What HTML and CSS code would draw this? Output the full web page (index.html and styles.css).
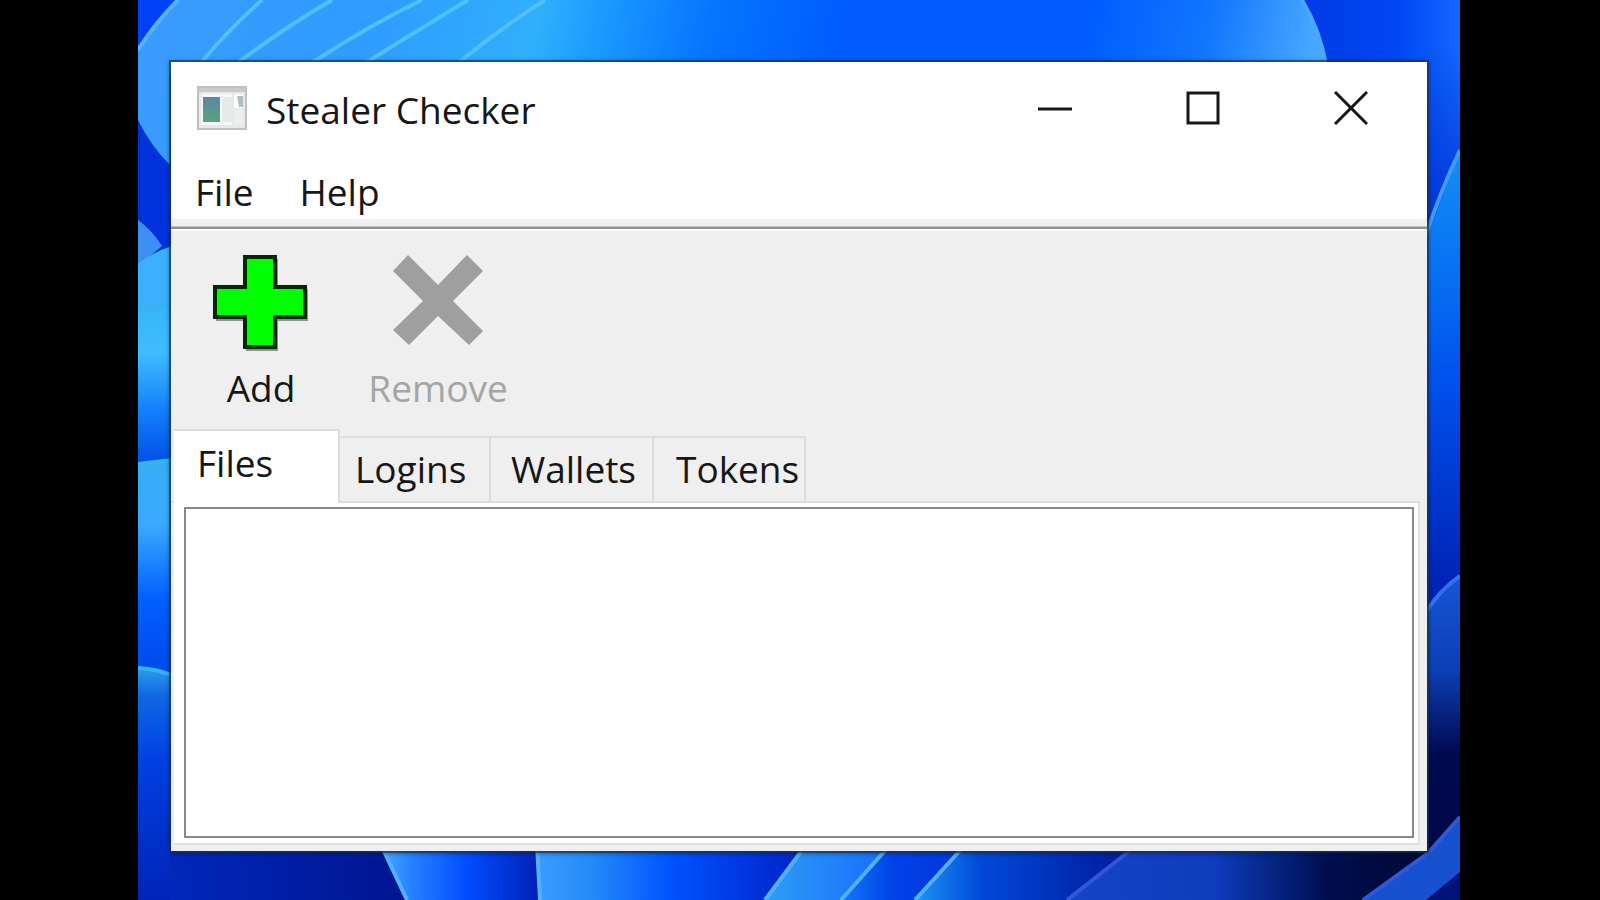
FILE: index.html
```html
<!DOCTYPE html>
<html lang="en">
<head>
<meta charset="utf-8">
<title>Stealer Checker</title>
<link rel="stylesheet" href="styles.css">
</head>
<body>
<main class="desktop">
  <svg class="wallpaper" viewBox="0 0 1322 900" preserveAspectRatio="none" aria-hidden="true">
    <defs>
      <linearGradient id="dome" gradientUnits="userSpaceOnUse" x1="0" y1="0" x2="1170" y2="250">
        <stop offset="0" stop-color="#3a9bfd"/><stop offset=".2" stop-color="#2f9cff"/><stop offset=".33" stop-color="#2fb0fc"/><stop offset=".38" stop-color="#1c9bff"/><stop offset=".47" stop-color="#0676ff"/><stop offset=".58" stop-color="#005cff"/><stop offset=".78" stop-color="#005cff"/><stop offset=".88" stop-color="#1276ff"/><stop offset=".97" stop-color="#48a8ff"/>
      </linearGradient>
      <linearGradient id="corner" gradientUnits="userSpaceOnUse" x1="1165" y1="0" x2="1322" y2="0">
        <stop offset="0" stop-color="#003be6"/><stop offset=".6" stop-color="#0046f2"/><stop offset="1" stop-color="#1468ff"/>
      </linearGradient>
      <linearGradient id="shade" x1="0" y1="0" x2="0" y2="1">
        <stop offset=".2" stop-color="#0030d0" stop-opacity="0"/><stop offset="1" stop-color="#0030d0"/>
      </linearGradient>
      <linearGradient id="left1" x1="0" y1="0" x2="0" y2="1">
        <stop offset="0" stop-color="#34b4fa"/><stop offset=".3" stop-color="#40bdff"/><stop offset=".65" stop-color="#1583fb"/><stop offset="1" stop-color="#0050e8"/>
      </linearGradient>
      <linearGradient id="left2" x1="0" y1="0" x2="0" y2="1">
        <stop offset="0" stop-color="#35aef4"/><stop offset=".3" stop-color="#3ba9ff"/><stop offset=".65" stop-color="#005eff"/><stop offset="1" stop-color="#0048ea"/>
      </linearGradient>
      <linearGradient id="left3" x1="0" y1="0" x2="0" y2="1">
        <stop offset="0" stop-color="#2c9de8"/><stop offset=".12" stop-color="#0f68e6"/><stop offset=".4" stop-color="#0040e2"/><stop offset="1" stop-color="#0024b8"/>
      </linearGradient>
      <linearGradient id="right1" gradientUnits="userSpaceOnUse" x1="0" y1="170" x2="0" y2="600">
        <stop offset="0" stop-color="#128af2"/><stop offset=".25" stop-color="#086ff2"/><stop offset=".5" stop-color="#0050ee"/><stop offset="1" stop-color="#0020b0"/>
      </linearGradient>
      <linearGradient id="right2" gradientUnits="userSpaceOnUse" x1="0" y1="575" x2="0" y2="850">
        <stop offset="0" stop-color="#1557d6"/><stop offset=".35" stop-color="#0c3eb4"/><stop offset=".65" stop-color="#000a50"/><stop offset="1" stop-color="#000a48"/>
      </linearGradient>
      <linearGradient id="bottom0"><stop offset="0" stop-color="#0028bb"/><stop offset="1" stop-color="#001590"/></linearGradient>
      <linearGradient id="bottom1"><stop offset="0" stop-color="#48aaff"/><stop offset=".2" stop-color="#2580ff"/><stop offset=".55" stop-color="#004cff"/><stop offset="1" stop-color="#0020b4"/></linearGradient>
      <linearGradient id="bottom2"><stop offset="0" stop-color="#3b9cff"/><stop offset=".2" stop-color="#248cf8"/><stop offset=".5" stop-color="#0052ff"/><stop offset="1" stop-color="#0020c4"/></linearGradient>
      <linearGradient id="bottom3"><stop offset="0" stop-color="#2d9df4"/><stop offset="1" stop-color="#186cff"/></linearGradient>
      <linearGradient id="bottom4"><stop offset="0" stop-color="#1678fa"/><stop offset=".4" stop-color="#0044e8"/><stop offset="1" stop-color="#0034d8"/></linearGradient>
      <linearGradient id="bottom5"><stop offset="0" stop-color="#1d94f4"/><stop offset=".3" stop-color="#0048d8"/><stop offset="1" stop-color="#001898"/></linearGradient>
      <linearGradient id="bottom6"><stop offset="0" stop-color="#1644c8"/><stop offset=".4" stop-color="#0d3cbc"/><stop offset=".7" stop-color="#000e50"/><stop offset="1" stop-color="#000730"/></linearGradient>
    </defs>
    <rect width="1322" height="900" fill="#0032dc"/>
    <path d="M0 0H37L0 46Z" fill="#0040f8"/>
    <path d="M37 0H1164Q1182 30 1188 75H32V165Q12 145 0 120V46Z" fill="url(#dome)"/>
    <path d="M1164 0H1322V260H1188V75Q1182 30 1164 0Z" fill="url(#corner)"/>
    <rect x="1285" width="37" height="240" fill="url(#shade)"/>
    <g fill="none" stroke="#50c0ff" stroke-width="4">
      <path d="M40 0Q16 24 0 50" stroke="#55b4ff"/>
      <path d="M124 0Q90 30 62 64M194 0Q146 28 98 64M284 0Q230 26 172 64M330 0Q280 30 226 64M407 0Q360 30 319 64"/>
      <path d="M1164 0Q1182 30 1188 65" stroke="#48a8ff"/>
    </g>
    <path d="M0 220Q14 230 24 246L0 266Z" fill="#3c90f4"/>
    <path d="M0 264Q14 252 34 246V310H0Z" fill="#3cb0ff"/>
    <path d="M0 310L34 305V462H0Z" fill="url(#left1)"/>
    <path d="M0 464L34 460V676H0Z" fill="url(#left2)"/>
    <path d="M0 668Q18 669 34 675V900H0Z" fill="url(#left3)"/>
    <path d="M0 310L34 305M0 464L34 460M0 668Q18 669 34 675" stroke="#35b5ee" stroke-width="4" fill="none"/>
    <path d="M1322 150L1288 240V620L1322 575Z" fill="url(#right1)"/>
    <path d="M1322 150Q1303 190 1288 235" stroke="#429cff" stroke-width="4" fill="none"/>
    <path d="M1322 575L1288 612V860H1322Z" fill="url(#right2)"/>
    <path d="M1322 576Q1302 590 1288 612" stroke="#3270f0" stroke-width="4" fill="none"/>
    <path d="M32 845H246L269 900H32Z" fill="url(#bottom0)"/>
    <path d="M243 845H399L402 900H269Z" fill="url(#bottom1)"/>
    <path d="M399 845H668L627 900H402Z" fill="url(#bottom2)"/>
    <path d="M668 845H752L703 900H627Z" fill="url(#bottom3)"/>
    <path d="M752 845H827L777 900H703Z" fill="url(#bottom4)"/>
    <path d="M827 845H999L929 900H777Z" fill="url(#bottom5)"/>
    <path d="M999 845H1300L1225 900H929Z" fill="url(#bottom6)"/>
    <path d="M1225 900L1290 853L1322 817V872L1288 900Z" fill="#1651d0"/>
    <path d="M1322 872L1288 900H1322Z" fill="#001478"/>
    <g fill="none" stroke-width="4">
      <path d="M243 845L269 900M399 845L402 900M668 845L627 900M752 845L703 900M827 845L777 900" stroke="#52b2ff"/>
      <path d="M999 845L929 900M1225 900L1290 853L1322 817" stroke="#3058d8"/>
    </g>
  </svg>

  <section class="window" aria-label="Stealer Checker">
    <header class="titlebar">
      <svg class="app-icon" viewBox="0 0 50 44" aria-hidden="true">
        <defs><linearGradient id="pane" x1="0" y1="0" x2="0" y2="1"><stop offset="0" stop-color="#5b86a4"/><stop offset="1" stop-color="#58a47c"/></linearGradient></defs>
        <rect x="1" y="1" width="48" height="42" fill="#e8e8ea" stroke="#c0c0c2" stroke-width="2"/>
        <rect x="2" y="2" width="46" height="4" fill="#cbc9ce"/>
        <rect x="4" y="8" width="31" height="31" fill="#f7f7f8"/>
        <rect x="6" y="11" width="17" height="25" fill="url(#pane)"/>
        <rect x="25" y="11" width="10" height="25" fill="#e4ebea"/>
        <rect x="37" y="8" width="9" height="14" fill="#fff"/>
        <path d="M40 10H46V21H42Z" fill="#b0bfc4"/>
        <rect x="37" y="24" width="9" height="15" fill="#eeeeec"/>
      </svg>
      <h1 class="title">Stealer Checker</h1>
      <div class="controls">
        <button class="control" aria-label="Minimize"><svg viewBox="0 0 34 34"><path d="M0 18H34"/></svg></button>
        <button class="control" aria-label="Maximize"><svg viewBox="0 0 34 34"><path d="M2 2H32V32H2Z"/></svg></button>
        <button class="control" aria-label="Close"><svg viewBox="0 0 34 34"><path d="M1 1L33 33M33 1L1 33"/></svg></button>
      </div>
    </header>
    <nav class="menubar">
      <button class="menu">File</button>
      <button class="menu">Help</button>
    </nav>
    <div class="toolbar">
      <button class="tool">
        <svg viewBox="0 0 96 96" aria-hidden="true"><path d="M33 4H65V34H95V66H65V96H33V66H3V34H33Z" fill="#8f8f8f"/><path d="M32 2H62V32H92V62H62V92H32V62H2V32H32Z" fill="#0f0" stroke="#002b00" stroke-width="4"/></svg>
        <span>Add</span>
      </button>
      <button class="tool" disabled>
        <svg viewBox="0 0 96 96" aria-hidden="true"><path d="M18 0L48 30L77 0L93 16L63 46L93 76L79 90L48 61L19 90L3 75L33 46L3 16Z" fill="#9f9f9f"/></svg>
        <span>Remove</span>
      </button>
    </div>
    <div class="tabs" role="tablist">
      <button class="tab active" role="tab" aria-selected="true" id="tab-files" aria-controls="files">Files</button>
      <button class="tab logins" role="tab" aria-selected="false">Logins</button>
      <button class="tab wallets" role="tab" aria-selected="false">Wallets</button>
      <button class="tab tokens" role="tab" aria-selected="false">Tokens</button>
    </div>
    <div class="panel" role="tabpanel" id="files" aria-labelledby="tab-files">
      <div class="file-list"></div>
    </div>
  </section>
</main>
</body>
</html>
```
FILE: styles.css
```css
* { box-sizing: border-box; }
body { margin: 0; background: #000; color: #161616; font: 37px/48px "Open Sans", "Noto Sans", sans-serif; }
button { font: inherit; color: inherit; border: 0; padding: 0; background: none; white-space: nowrap; }
.desktop { position: relative; display: flex; min-height: 100vh; margin: 0 140px 0 138px; padding: 62px 33px 49px; overflow: hidden; }
.wallpaper { position: absolute; inset: 0; width: 100%; height: 100%; }
.window { position: relative; flex: 1; display: flex; flex-direction: column; min-width: 0; background: #efefef; box-shadow: 0 0 0 2px rgba(18, 50, 90, .65), 0 1px 4px 2px rgba(10, 20, 40, .4); }
.titlebar { display: flex; align-items: center; height: 92px; padding: 0 2px 0 26px; background: #fff; }
.app-icon { width: 50px; height: 44px; }
.title { margin: 4px 0 0 19px; font-size: 37px; font-weight: 400; line-height: 48px; }
.controls { display: flex; margin-left: auto; }
.control { display: grid; place-items: center; width: 148px; height: 92px; }
.control svg { width: 34px; height: 34px; fill: none; stroke: #161616; stroke-width: 3px; }
.menubar { display: flex; align-items: center; gap: 46px; height: 75px; padding: 0 24px; background: linear-gradient(#fff 64px, #efefef 66px 72px, #909090 73px); }
.toolbar { display: flex; height: 200px; border-top: 2px solid #fff; padding: 24px 0 0 8px; }
.tool { display: flex; flex-direction: column; align-items: center; gap: 13px; width: 160px; padding-left: 4px; }
.tool + .tool { width: 192px; padding-left: 6px; }
.tool svg { width: 96px; height: 96px; }
.tool:disabled { color: #a5a5a5; }
.tabs { display: flex; align-items: flex-end; height: 74px; padding-left: 3px; background: linear-gradient(#dcdcdc, #dcdcdc) left bottom / calc(100% - 7px) 2px no-repeat; }
.tab { height: 67px; padding-bottom: 2px; border: 2px solid #dcdcdc; border-left: 0; text-align: left; }
.tab.active { height: 74px; width: 166px; padding: 0 0 8px 23px; border-bottom: 0; background: #fff; }
.logins { width: 151px; padding-left: 15px; }
.wallets { width: 163px; padding-left: 20px; }
.tokens { width: 152px; padding-left: 22px; }
.panel { flex: 1; display: flex; margin: 0 7px 6px 3px; padding: 4px 4px 5px 10px; background: #fff; border-right: 2px solid #dfe3e3; border-bottom: 2px solid #dddde2; }
.file-list { flex: 1; border: 2px solid #888; background: #fff; }
```
